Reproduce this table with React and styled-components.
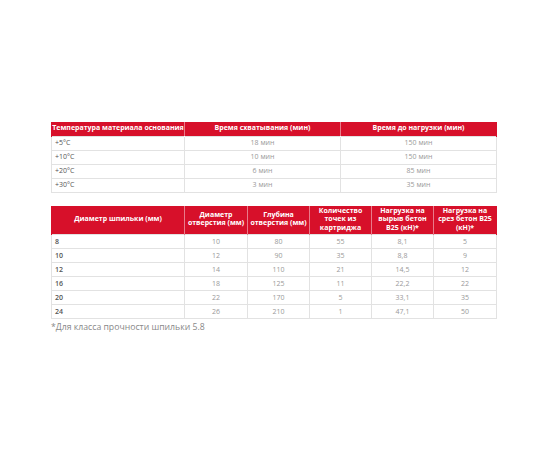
import React from 'react';
import styled, { createGlobalStyle } from 'styled-components';

const GlobalStyle = createGlobalStyle`
  html, body {
    margin: 0;
    padding: 0;
    background: #fff;
    font-family: "Open Sans", "DejaVu Sans", sans-serif;
  }
`;

const cureRows = [
  ['+5°C', '18 мин', '150 мин'],
  ['+10°C', '10 мин', '150 мин'],
  ['+20°C', '6 мин', '85 мин'],
  ['+30°C', '3 мин', '35 мин']
];

const loadHead = [
  'Диаметр шпильки (мм)',
  'Диаметр отверстия (мм)',
  'Глубина отверстия (мм)',
  'Количество точек из картриджа',
  'Нагрузка на вырыв бетон B25 (кН)*',
  'Нагрузка на срез бетон B25 (кН)*'
];

const loadRows = [
  ['8', '10', '80', '55', '8,1', '5'],
  ['10', '12', '90', '35', '8,8', '9'],
  ['12', '14', '110', '21', '14,5', '12'],
  ['16', '18', '125', '11', '22,2', '22'],
  ['20', '22', '170', '5', '33,1', '35'],
  ['24', '26', '210', '1', '47,1', '50']
];

const cureCols = [133, 156, 156];
const loadCols = [133, 63, 62, 62, 62, 63];

const App = () => {
  return (
    <Page>
      <GlobalStyle />
      <Table>
        <colgroup>
          {cureCols.map((w, i) => (
            <Col key={i} $w={w} />
          ))}
        </colgroup>
        <thead>
          <tr>
            <Th>Температура материала основания</Th>
            <Th>Время схватывания (мин)</Th>
            <Th>Время до нагрузки (мин)</Th>
          </tr>
        </thead>
        <tbody>
          {cureRows.map((row, i) => (
            <tr key={i}>
              {row.map((cell, j) => (
                <Td key={j} $first={j === 0}>{cell}</Td>
              ))}
            </tr>
          ))}
        </tbody>
      </Table>

      <Table $gap>
        <colgroup>
          {loadCols.map((w, i) => (
            <Col key={i} $w={w} />
          ))}
        </colgroup>
        <thead>
          <tr>
            {loadHead.map((h, i) => (
              <Th key={i} $tall>{h}</Th>
            ))}
          </tr>
        </thead>
        <tbody>
          {loadRows.map((row, i) => (
            <tr key={i}>
              {row.map((cell, j) => (
                <Td key={j} $first={j === 0} $strong={j === 0}>{cell}</Td>
              ))}
            </tr>
          ))}
        </tbody>
      </Table>

      <Note>*Для класса прочности шпильки 5.8</Note>
    </Page>
  );
};

export default App;

const Page = styled.div`
  width: 445px;
  padding: 122px 0 0 51px;
`;

const Table = styled.table`
  width: 445px;
  border-collapse: collapse;
  table-layout: fixed;
  margin-top: ${p => (p.$gap ? '13px' : '0')};
`;

const Col = styled.col`
  width: ${p => p.$w}px;
`;

const Th = styled.th`
  background: #d7102a;
  color: #fff;
  font-size: 7px;
  font-weight: 700;
  line-height: 8.5px;
  text-align: center;
  white-space: ${p => (p.$tall ? 'normal' : 'nowrap')};
  padding: ${p => (p.$tall ? '1px 1px 2px' : '2px 0 3px')};
  height: ${p => (p.$tall ? '28px' : '13px')};
  box-sizing: border-box;
  border-left: 1px solid rgba(255, 255, 255, 0.45);
  border-right: 1px solid rgba(255, 255, 255, 0.45);
  &:first-child {
    border-left: 1px solid #d7102a;
  }
  &:last-child {
    border-right: 1px solid #d7102a;
  }
`;

const Td = styled.td`
  height: 14px;
  box-sizing: border-box;
  padding: 0 3px;
  border: 1px solid #e2e2e2;
  font-size: 7px;
  line-height: 12px;
  font-weight: ${p => (p.$strong ? 600 : 400)};
  color: ${p => (p.$first ? '#555' : '#999')};
  text-align: ${p => (p.$first ? 'left' : 'center')};
`;

const Note = styled.div`
  margin-top: 2px;
  font-size: 8.7px;
  line-height: 12px;
  color: #888;
`;
